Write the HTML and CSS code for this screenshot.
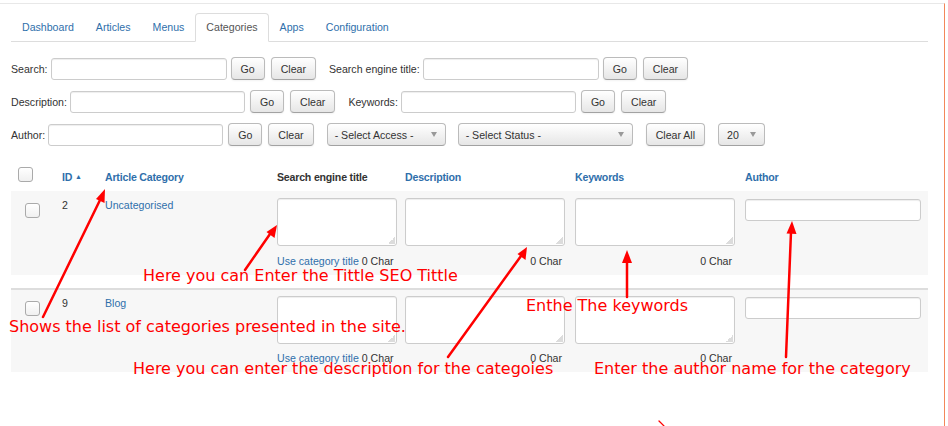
FILE: index.html
```html
<!DOCTYPE html>
<html>
<head>
<meta charset="utf-8">
<link rel="stylesheet" href="styles.css">
</head>
<body>
<div class="frame">
  <ul class="tabs">
    <li><a class="tab">Dashboard</a></li>
    <li><a class="tab">Articles</a></li>
    <li><a class="tab">Menus</a></li>
    <li><a class="tab active">Categories</a></li>
    <li><a class="tab">Apps</a></li>
    <li><a class="tab">Configuration</a></li>
  </ul>

  <div class="filters">
    <div class="frow">
      <div class="fgroup">
        <label class="flabel">Search:</label>
        <input class="finput" type="text">
        <button class="btn go">Go</button>
        <button class="btn">Clear</button>
      </div>
      <div class="fgroup">
        <label class="flabel">Search engine title:</label>
        <input class="finput" type="text">
        <button class="btn go">Go</button>
        <button class="btn">Clear</button>
      </div>
    </div>
    <div class="frow">
      <div class="fgroup">
        <label class="flabel">Description:</label>
        <input class="finput w175" type="text">
        <button class="btn go">Go</button>
        <button class="btn">Clear</button>
      </div>
      <div class="fgroup">
        <label class="flabel">Keywords:</label>
        <input class="finput w175" type="text">
        <button class="btn go">Go</button>
        <button class="btn">Clear</button>
      </div>
    </div>
    <div class="frow">
      <div class="fgroup">
        <label class="flabel">Author:</label>
        <input class="finput w175" type="text">
        <button class="btn go">Go</button>
        <button class="btn">Clear</button>
      </div>
      <div class="select sel-access"><span>- Select Access -</span><span class="caret"></span></div>
      <div class="select sel-status"><span>- Select Status -</span><span class="caret"></span></div>
      <button class="btn">Clear All</button>
      <div class="select sel-limit"><span>20</span><span class="caret"></span></div>
    </div>
  </div>

  <div class="table">
    <div class="thead">
      <div class="cell"><span class="check head-check"></span></div>
      <div class="cell link">ID <span class="sort">&#9650;</span></div>
      <div class="cell link">Article Category</div>
      <div class="cell dark">Search engine title</div>
      <div class="cell link">Description</div>
      <div class="cell link">Keywords</div>
      <div class="cell link">Author</div>
    </div>

    <div class="trow first">
      <div class="cell"><span class="check row-check"></span></div>
      <div class="cell txt">2</div>
      <div class="cell txt"><a class="lnk">Uncategorised</a></div>
      <div class="cell">
        <textarea class="ta ta-seo"></textarea>
        <div class="chars left"><a class="lnk">Use category title</a> 0 Char</div>
      </div>
      <div class="cell">
        <textarea class="ta ta-wide"></textarea>
        <div class="chars right">0 Char</div>
      </div>
      <div class="cell">
        <textarea class="ta ta-wide"></textarea>
        <div class="chars right">0 Char</div>
      </div>
      <div class="cell"><input class="finput author" type="text"></div>
    </div>

    <div class="trow second">
      <div class="cell"><span class="check row-check"></span></div>
      <div class="cell txt">9</div>
      <div class="cell txt"><a class="lnk">Blog</a></div>
      <div class="cell">
        <textarea class="ta ta-seo"></textarea>
        <div class="chars left"><a class="lnk">Use category title</a> 0 Char</div>
      </div>
      <div class="cell">
        <textarea class="ta ta-wide"></textarea>
        <div class="chars right">0 Char</div>
      </div>
      <div class="cell">
        <textarea class="ta ta-wide"></textarea>
        <div class="chars right">0 Char</div>
      </div>
      <div class="cell"><input class="finput author" type="text"></div>
    </div>
  </div>
</div>

<div class="notes">
  <svg class="arrows" width="948" height="426" viewBox="0 0 948 426">
    <g stroke="#ff0000" stroke-width="2.5" stroke-linecap="round" fill="none">
      <line x1="43" y1="317" x2="101" y2="198"/>
      <line x1="245" y1="270" x2="270" y2="234"/>
      <line x1="448" y1="357" x2="521" y2="256"/>
      <line x1="627" y1="297" x2="627" y2="260"/>
      <line x1="786" y1="357" x2="791" y2="232"/>
      <line x1="659" y1="421" x2="664" y2="426" stroke-width="1.2"/>
    </g>
    <g fill="#ff0000">
      <polygon points="105,189 104.5,203 96,199"/>
      <polygon points="277,225 274.5,238 266.5,232"/>
      <polygon points="527,247 525.5,260 517.5,254"/>
      <polygon points="627,250 632,263 622,263"/>
      <polygon points="792,221 796.5,234 786.5,233.5"/>
    </g>
  </svg>
  <div class="note n1">Here you can Enter the Tittle SEO Tittle</div>
  <div class="note n2">Shows the list of categories presented in the site.</div>
  <div class="note n3">Enthe The keywords</div>
  <div class="note n4">Here you can enter the description for the categoies</div>
  <div class="note n5">Enter the author name for the category</div>
</div>
</body>
</html>
```

FILE: styles.css
```css
* { box-sizing: border-box; }
html, body { margin: 0; padding: 0; background: #fff; }
body {
  font-family: "Liberation Sans", Arial, sans-serif;
  font-size: 10.6px;
  color: #333;
  width: 948px;
  height: 426px;
  overflow: hidden;
  position: relative;
}

.frame {
  margin-top: 3px;
  width: 945px;
  min-height: 423px;
  border-top: 1px solid #e8e8e8;
  border-right: 1px solid #f3875a;
  padding: 9px 16px 0 11px;
}

/* tabs */
.tabs {
  list-style: none;
  margin: 0;
  padding: 0;
  display: flex;
  height: 29px;
  border-bottom: 1px solid #dddddd;
}
.tab {
  display: block;
  height: 29px;
  line-height: 27px;
  padding: 0 10px;
  border: 1px solid transparent;
  border-radius: 4px 4px 0 0;
  color: #2f6fab;
}
.tab.active {
  color: #555;
  border-color: #dddddd;
  border-bottom-color: #fff;
  background: #fff;
}

/* filters */
.filters {
  margin-top: 15px;
  display: flex;
  flex-direction: column;
  gap: 10px;
}
.frow {
  display: flex;
  align-items: center;
  height: 23px;
  gap: 13px;
}
.fgroup {
  display: flex;
  align-items: center;
}
.flabel {
  margin-right: 3px;
  color: #333;
}
.finput {
  width: 176px;
  height: 22px;
  border: 1px solid #cccccc;
  border-radius: 3px;
  background: #fff;
  box-shadow: inset 0 1px 1px rgba(0,0,0,0.07);
  padding: 0 4px;
  margin: 0 4px 0 0;
  font: inherit;
}
.finput.w175 { width: 175px; margin-right: 5px; }
.btn {
  height: 23px;
  padding: 0 9px;
  font: inherit;
  color: #333;
  border: 1px solid #bbbbbb;
  border-bottom-color: #a2a2a2;
  border-radius: 4px;
  background: linear-gradient(#ffffff, #e6e6e6);
  box-shadow: inset 0 1px 0 rgba(255,255,255,0.2), 0 1px 2px rgba(0,0,0,0.05);
  margin: 0;
}
.btn.go { margin-right: 6px; }

.select {
  height: 23px;
  display: flex;
  align-items: center;
  justify-content: space-between;
  padding: 0 8px 0 7px;
  border: 1px solid #bbbbbb;
  border-bottom-color: #a2a2a2;
  border-radius: 4px;
  background: linear-gradient(#ffffff, #e6e6e6);
  color: #333;
}
.sel-access { width: 119px; }
.sel-status { width: 175px; margin-left: -1px; }
.sel-limit { width: 47px; padding-left: 8px; }
.caret {
  width: 0;
  height: 0;
  border-left: 3px solid transparent;
  border-right: 3px solid transparent;
  border-top: 5px solid #999;
}

/* table */
.table { margin-top: 14px; }
.thead, .trow {
  display: grid;
  grid-template-columns: 51px 43px 172px 128px 170px 170px 183px;
}
.thead {
  height: 31px;
  align-items: start;
}
.thead .cell {
  padding-top: 11px;
  line-height: 12px;
  font-weight: bold;
  letter-spacing: -0.2px;
}
.thead .cell:first-child { padding-top: 7px; }
.link { color: #2f6fab; }
.dark { color: #333; }
.sort { font-size: 7px; vertical-align: 2px; }

.check {
  display: block;
  width: 15px;
  height: 15px;
  border: 1px solid #aaaaaa;
  border-radius: 3px;
  background: linear-gradient(#ffffff, #f0f0f0);
}
.head-check { margin-left: 7px; }
.row-check { margin-left: 14px; margin-top: 5px; }

.trow {
  background: #f7f7f7;
  align-items: start;
}
.trow.first { padding: 7px 0 7px; }
.trow.second {
  margin-top: 13px;
  border-top: 2px solid #dddddd;
  padding: 6px 0 7px;
}
.txt { line-height: 14px; }
.lnk { color: #2f6fab; }

.ta {
  display: block;
  height: 48px;
  border: 1px solid #cccccc;
  border-radius: 3px;
  background-color: #fff;
  background-image: linear-gradient(135deg, transparent 50%, #dcdcdc 50%);
  background-size: 7px 7px;
  background-position: right 1px bottom 1px;
  background-repeat: no-repeat;
  box-shadow: inset 0 1px 1px rgba(0,0,0,0.07);
  margin: 0;
  resize: none;
  font: inherit;
}
.ta-seo { width: 120px; }
.ta-wide { width: 160px; }
.chars {
  margin-top: 8px;
  line-height: 14px;
  color: #333;
}
.trow.second .chars { margin-top: 7px; }
.chars.left { text-align: left; }
.chars.right { width: 160px; text-align: right; padding-right: 3px; }
.finput.author { margin: 1px 0 0 0; width: 176px; }

/* annotations overlay */
.notes {
  position: absolute;
  left: 0;
  top: 0;
  width: 948px;
  height: 426px;
  pointer-events: none;
}
.arrows { position: absolute; left: 0; top: 0; }
.note {
  position: absolute;
  font-family: "DejaVu Sans", sans-serif;
  font-size: 16px;
  line-height: 20px;
  color: #ff0000;
  white-space: nowrap;
}
.n1 { left: 143px; top: 266px; }
.n2 { left: 9px; top: 317px; }
.n3 { left: 526px; top: 296px; }
.n4 { left: 133px; top: 359px; }
.n5 { left: 594px; top: 359px; }
```
